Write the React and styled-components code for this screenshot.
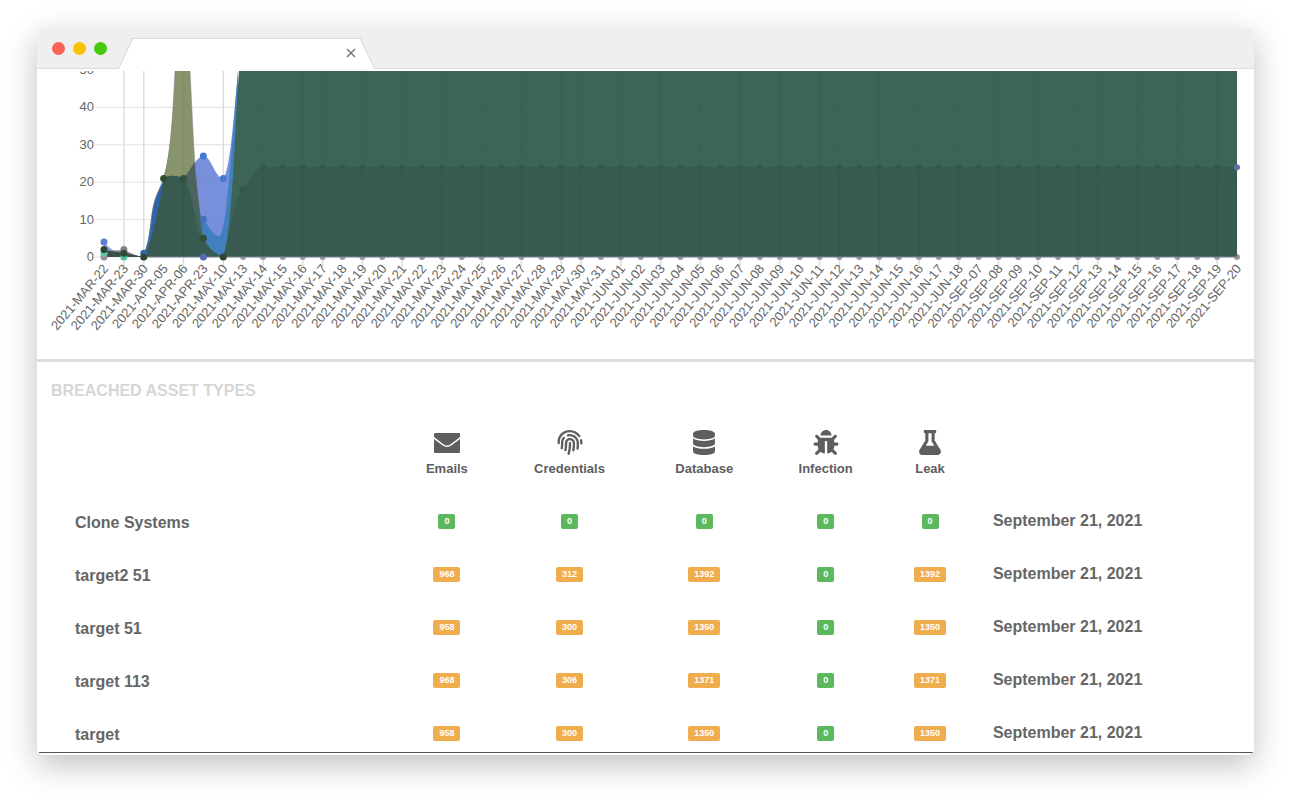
import React from 'react';
import styled, { createGlobalStyle } from 'styled-components';
import { FaFingerprint, FaDatabase, FaBug, FaFlask } from 'react-icons/fa';

const GlobalStyle = createGlobalStyle`
  * {
    box-sizing: border-box;
  }

  body {
    margin: 0;
    background: #fff;
    font-family: 'Liberation Sans', Arial, sans-serif;
    color: #5e5e5e;
  }
`;

const Page = styled.div`
  padding: 28px 36px 52px 37px;
`;

const BrowserWindow = styled.div`
  background: #fff;
  border-radius: 6px;
  overflow: hidden;
  box-shadow: 0 10px 32px rgba(0, 0, 0, 0.25);
`;

const TitleBar = styled.header`
  display: flex;
  align-items: flex-end;
  height: 41px;
  padding-left: 15px;
  background: #efefef;
  border-bottom: 1px solid #dcdcdc;
`;

const Lights = styled.div`
  display: flex;
  gap: 8px;
  align-self: center;
  width: 66px;
`;

const Light = styled.button`
  width: 13px;
  height: 13px;
  padding: 0;
  border: none;
  border-radius: 50%;
  background: ${({ color }) => color};
`;

const Tab = styled.div`
  width: 257px;
  height: 31px;
  margin-bottom: -1px;
  padding: 1px 1px 0;
  background: #dcdcdc;
  clip-path: polygon(0 100%, 14px 0, 243px 0, 100% 100%);
`;

const TabFace = styled.div`
  display: flex;
  align-items: center;
  justify-content: flex-end;
  height: 100%;
  padding: 0 18px 2px 0;
  background: #fff;
  clip-path: polygon(0 100%, 14px 0, 241px 0, 100% 100%);
`;

const CloseButton = styled.button`
  display: flex;
  padding: 0;
  border: none;
  background: transparent;
  color: #777;
`;

const ChartSection = styled.section`
  border-bottom: 3px solid #dcdcdc;
`;

const ChartSvg = styled.svg`
  display: block;
  width: 100%;
  height: auto;
`;

const TickLabel = styled.text`
  font-size: 13px;
  fill: #666;
  text-anchor: end;
`;

const AssetSection = styled.section`
  padding-top: 20px;
  border-bottom: 1px solid #555;
  margin: 0 1px 2px 2px;
`;

const SectionTitle = styled.h2`
  margin: 0 0 0 12px;
  font-size: 16px;
  line-height: 18px;
  color: #d6d6d6;
`;

const Table = styled.table`
  width: 100%;
  table-layout: fixed;
  border-collapse: collapse;
`;

const Column = styled.col`
  width: ${({ $share }) => $share}%;
`;

const HeadCell = styled.th`
  padding: 30px 0 18px;
  font-size: 13px;
  line-height: 16px;
  text-align: center;

  svg {
    display: block;
    width: 26px;
    height: 25px;
    margin: 0 auto 6px;
  }
`;

const Cell = styled.td`
  padding: 17px 0 18px;
  font-size: 13px;
  line-height: 18px;
  text-align: center;

  tr:last-child > & {
    padding-bottom: 10px;
  }
`;

const NameCell = styled.th`
  padding: 19px 0 16px 36px;
  color: #666;
  font-size: 16px;
  line-height: 18px;
  text-align: left;

  tr:last-child > & {
    padding-bottom: 8px;
  }
`;

const DateCell = styled(Cell)`
  padding-left: 7px;
  color: #666;
  font-size: 16px;
  font-weight: bold;
  text-align: left;
`;

const Badge = styled.span`
  display: block;
  width: fit-content;
  margin: 0 auto;
  padding: 0 6px;
  border-radius: 2px;
  background: ${({ $count }) => ($count > 0 ? '#f0ad4e' : '#5cb85c')};
  color: #fff;
  font-size: 9px;
  font-weight: bold;
  line-height: 15px;
`;

const EnvelopeIcon = () => (
  <svg viewBox="0 0 26 25" fill="currentColor">
    <path d="M0 4 Q0 3 1 3 H25 Q26 3 26 4 V7 L17 14 Q13 17 9 14 L0 7 Z" />
    <path d="M0 9 L8 15 Q13 19 18 15 L26 9 V22 Q26 23 25 23 H1 Q0 23 0 22 Z" />
  </svg>
);

// Chart geometry
const WIDTH = 1217;
const HEIGHT = 290;
const LEFT = 67;
const STEP = 1133 / 57;
const BASE = 188;
const TOP = 2;

const pad = (n) => String(n).padStart(2, '0');
const range = (month, from, to) =>
  Array.from({ length: to - from + 1 }, (_, i) => `2021-${month}-${pad(from + i)}`);

const dates = [
  '2021-MAR-22',
  '2021-MAR-23',
  '2021-MAR-30',
  '2021-APR-05',
  '2021-APR-06',
  '2021-APR-23',
  '2021-MAY-10',
  ...range('MAY', 13, 31),
  ...range('JUN', 1, 18),
  ...range('SEP', 7, 20),
];

const gridColumns = [
  1, 2, 4, 6, 8, 10, 11, 13, 15, 17, 19, 21, 23, 24, 26, 28, 30, 32, 34, 36, 37, 39, 41, 43, 45,
  47, 49, 50, 52, 54, 56,
];

const xAt = (index) => LEFT + index * STEP;
const yAt = (value) => BASE - value * 3.74;

const areas = [
  // early counts
  { fill: '#8fa4e4', d: 'M67 174 C72 178 78 184 87 185 L106 188 L67 188 Z' },
  { fill: '#8b8388', d: 'M67 182 L87 181 C94 184 98 187 107 188 L67 188 Z' },
  { fill: '#3a4f48', d: 'M67 181 L87 184 L107 188 L67 188 Z' },
  // email, credential and database counts
  { fill: '#2f62a6', d: 'M103 188 C112 184 113 152 116 138 C118 128 122 120 127 110 L135 188 Z' },
  { fill: '#788fdc', d: 'M146 110 C156 98 160 87 167 87 C175 89 178 109 186 109 C192 106 196 60 201 2 L203 188 L148 188 Z' },
  { fill: '#427fbf', d: 'M158 132 C162 141 163 147 167 151 C172 158 178 169 183 167 C190 155 192 110 201 2 L203 188 L158 188 Z' },
  { fill: '#87946c', d: 'M126 110 C134 85 136 40 138 2 L153 2 C155 40 157 88 159 110 L166 170 L130 150 Z' },
  { fill: '#4e625f', d: 'M146 110 C151 104 154 98 158 93 L160 118 L166 168 Z' },
  { fill: '#3d6555', d: 'M106 188 C116 174 121 142 127 110 C132 105 140 107 146 109 C151 106 155 130 158 140 C163 160 168 182 186 188 Z' },
  { fill: '#385a50', d: 'M106 188 C116 174 121 142 127 110 C132 105 140 107 146 109 C154 121 156 143 161 163 C165 174 176 184 186 188 Z' },
  { fill: '#3d6555', d: 'M186 188 C191 176 194 135 196 108 C198 70 200 30 202 2 L1200 2 L1200 188 Z' },
  { fill: '#385a50', d: 'M186 188 C193 170 195 135 206 120 C213 112 218 98 226 98 L1200 98 L1200 188 Z' },
];

const startDots = [
  [0, 4, '#5c80d8'],
  [0, 0, '#9b8ba0'],
  [0, 1, '#5fc8a0'],
  [0, 2, '#2c4433'],
  [1, 2, '#8b7f88'],
  [1, 0, '#4fbf9c'],
  [1, 1, '#2f4a33'],
  [2, 1, '#3668ad'],
  [2, 0, '#2b482e'],
  [3, 21, '#2f4d31'],
  [4, 21, '#34503f'],
  [5, 27, '#4379ce'],
  [5, 10, '#3b74b8'],
  [5, 5, '#2f4d31'],
  [5, 0, '#5a68b4'],
  [6, 21, '#4379ce'],
  [6, 0, '#2b482e'],
  [7, 18, '#36574c'],
];

const BreachChart = () => (
  <ChartSvg viewBox={`0 0 ${WIDTH} ${HEIGHT}`} role="img" aria-label="Breached assets by date">
    <defs>
      <clipPath id="plot">
        <rect x="0" y={TOP} width={WIDTH} height={HEIGHT} />
      </clipPath>
    </defs>

    <g clipPath="url(#plot)">
      {[0, 10, 20, 30, 40, 50].map((value) => (
        <g key={value}>
          <line x1={58} x2={1200} y1={yAt(value)} y2={yAt(value)} stroke="#e3e3e3" />
          <TickLabel x={57} y={yAt(value) + 4}>{value}</TickLabel>
        </g>
      ))}
      {gridColumns.map((index) => (
        <line key={index} x1={xAt(index)} x2={xAt(index)} y1={TOP} y2={BASE + 10} stroke="#dedede" strokeWidth="1.5" />
      ))}

      {/* zero series, half hidden by the areas */}
      {dates.slice(7).map((date, i) => (
        <circle key={date} cx={xAt(i + 7)} cy={BASE} r="3" fill="#a295a6" />
      ))}
      {areas.map((area) => (
        <path key={area.d} fill={area.fill} d={area.d} />
      ))}
      <path d="M106 186 C114 180 113 152 116 138 C118 128 122 120 127 110 C134 85 136 40 138 2 M153 2 C155 40 157 88 159 110" fill="none" stroke="#85828a" strokeOpacity="0.5" />
      <line x1={107} x2={1200} y1={BASE} y2={BASE} stroke="#7b8494" />
      {gridColumns.filter((index) => index > 2 && index !== 6).map((index) => (
        <line key={index} x1={xAt(index)} x2={xAt(index)} y1={TOP} y2={BASE} stroke="#000" strokeOpacity="0.04" strokeWidth="1.5" />
      ))}
      {[10, 20, 30, 40].map((value) => (
        <line key={value} x1={126} x2={1200} y1={yAt(value)} y2={yAt(value)} stroke="#000" strokeOpacity="0.02" />
      ))}
      {dates.slice(8, -1).map((date, i) => (
        <circle key={date} cx={xAt(i + 8)} cy={yAt(24)} r="3" fill="#36574c" />
      ))}
      {startDots.map(([index, value, fill]) => (
        <circle key={`${index}-${value}`} cx={xAt(index)} cy={yAt(value)} r="3.5" fill={fill} />
      ))}
      <circle cx={xAt(57)} cy={yAt(24)} r="3" fill="#5f72ac" />
    </g>

    {dates.map((date, index) => (
      <TickLabel key={date} transform={`translate(${xAt(index) + 5} ${BASE + 12}) rotate(-50)`}>
        {date}
      </TickLabel>
    ))}
  </ChartSvg>
);

const assetTypes = [
  { name: 'Emails', Icon: EnvelopeIcon },
  { name: 'Credentials', Icon: FaFingerprint },
  { name: 'Database', Icon: FaDatabase },
  { name: 'Infection', Icon: FaBug },
  { name: 'Leak', Icon: FaFlask },
];

const targets = [
  { name: 'Clone Systems', counts: [0, 0, 0, 0, 0] },
  { name: 'target2 51', counts: [968, 312, 1392, 0, 1392] },
  { name: 'target 51', counts: [958, 300, 1350, 0, 1350] },
  { name: 'target 113', counts: [968, 306, 1371, 0, 1371] },
  { name: 'target', counts: [958, 300, 1350, 0, 1350] },
];

const columnShares = [28.6, 10, 10.2, 12, 8, 9.2, 22];

const App = () => (
  <>
    <GlobalStyle />
    <Page>
      <BrowserWindow>
        <TitleBar>
          <Lights>
            <Light color="#fa6255" aria-label="Close window" />
            <Light color="#fbc002" aria-label="Minimize window" />
            <Light color="#45cb0d" aria-label="Maximize window" />
          </Lights>
          <Tab>
            <TabFace>
              <CloseButton aria-label="Close tab">
                <svg width="10" height="10" viewBox="0 0 10 10" fill="none" stroke="currentColor" strokeWidth="1.5">
                  <path d="M1 1 L9 9 M9 1 L1 9" />
                </svg>
              </CloseButton>
            </TabFace>
          </Tab>
        </TitleBar>

        <ChartSection>
          <BreachChart />
        </ChartSection>

        <AssetSection>
          <SectionTitle>BREACHED ASSET TYPES</SectionTitle>
          <Table>
            <colgroup>
              {columnShares.map((share, index) => (
                <Column key={index} $share={share} />
              ))}
            </colgroup>
            <thead>
              <tr>
                <HeadCell as="td" />
                {assetTypes.map(({ name, Icon }) => (
                  <HeadCell key={name} scope="col">
                    <Icon />
                    {name}
                  </HeadCell>
                ))}
                <HeadCell as="td" />
              </tr>
            </thead>
            <tbody>
              {targets.map((target) => (
                <tr key={target.name}>
                  <NameCell scope="row">{target.name}</NameCell>
                  {target.counts.map((count, index) => (
                    <Cell key={assetTypes[index].name}>
                      <Badge $count={count}>{count}</Badge>
                    </Cell>
                  ))}
                  <DateCell>September 21, 2021</DateCell>
                </tr>
              ))}
            </tbody>
          </Table>
        </AssetSection>
      </BrowserWindow>
    </Page>
  </>
);

export default App;
